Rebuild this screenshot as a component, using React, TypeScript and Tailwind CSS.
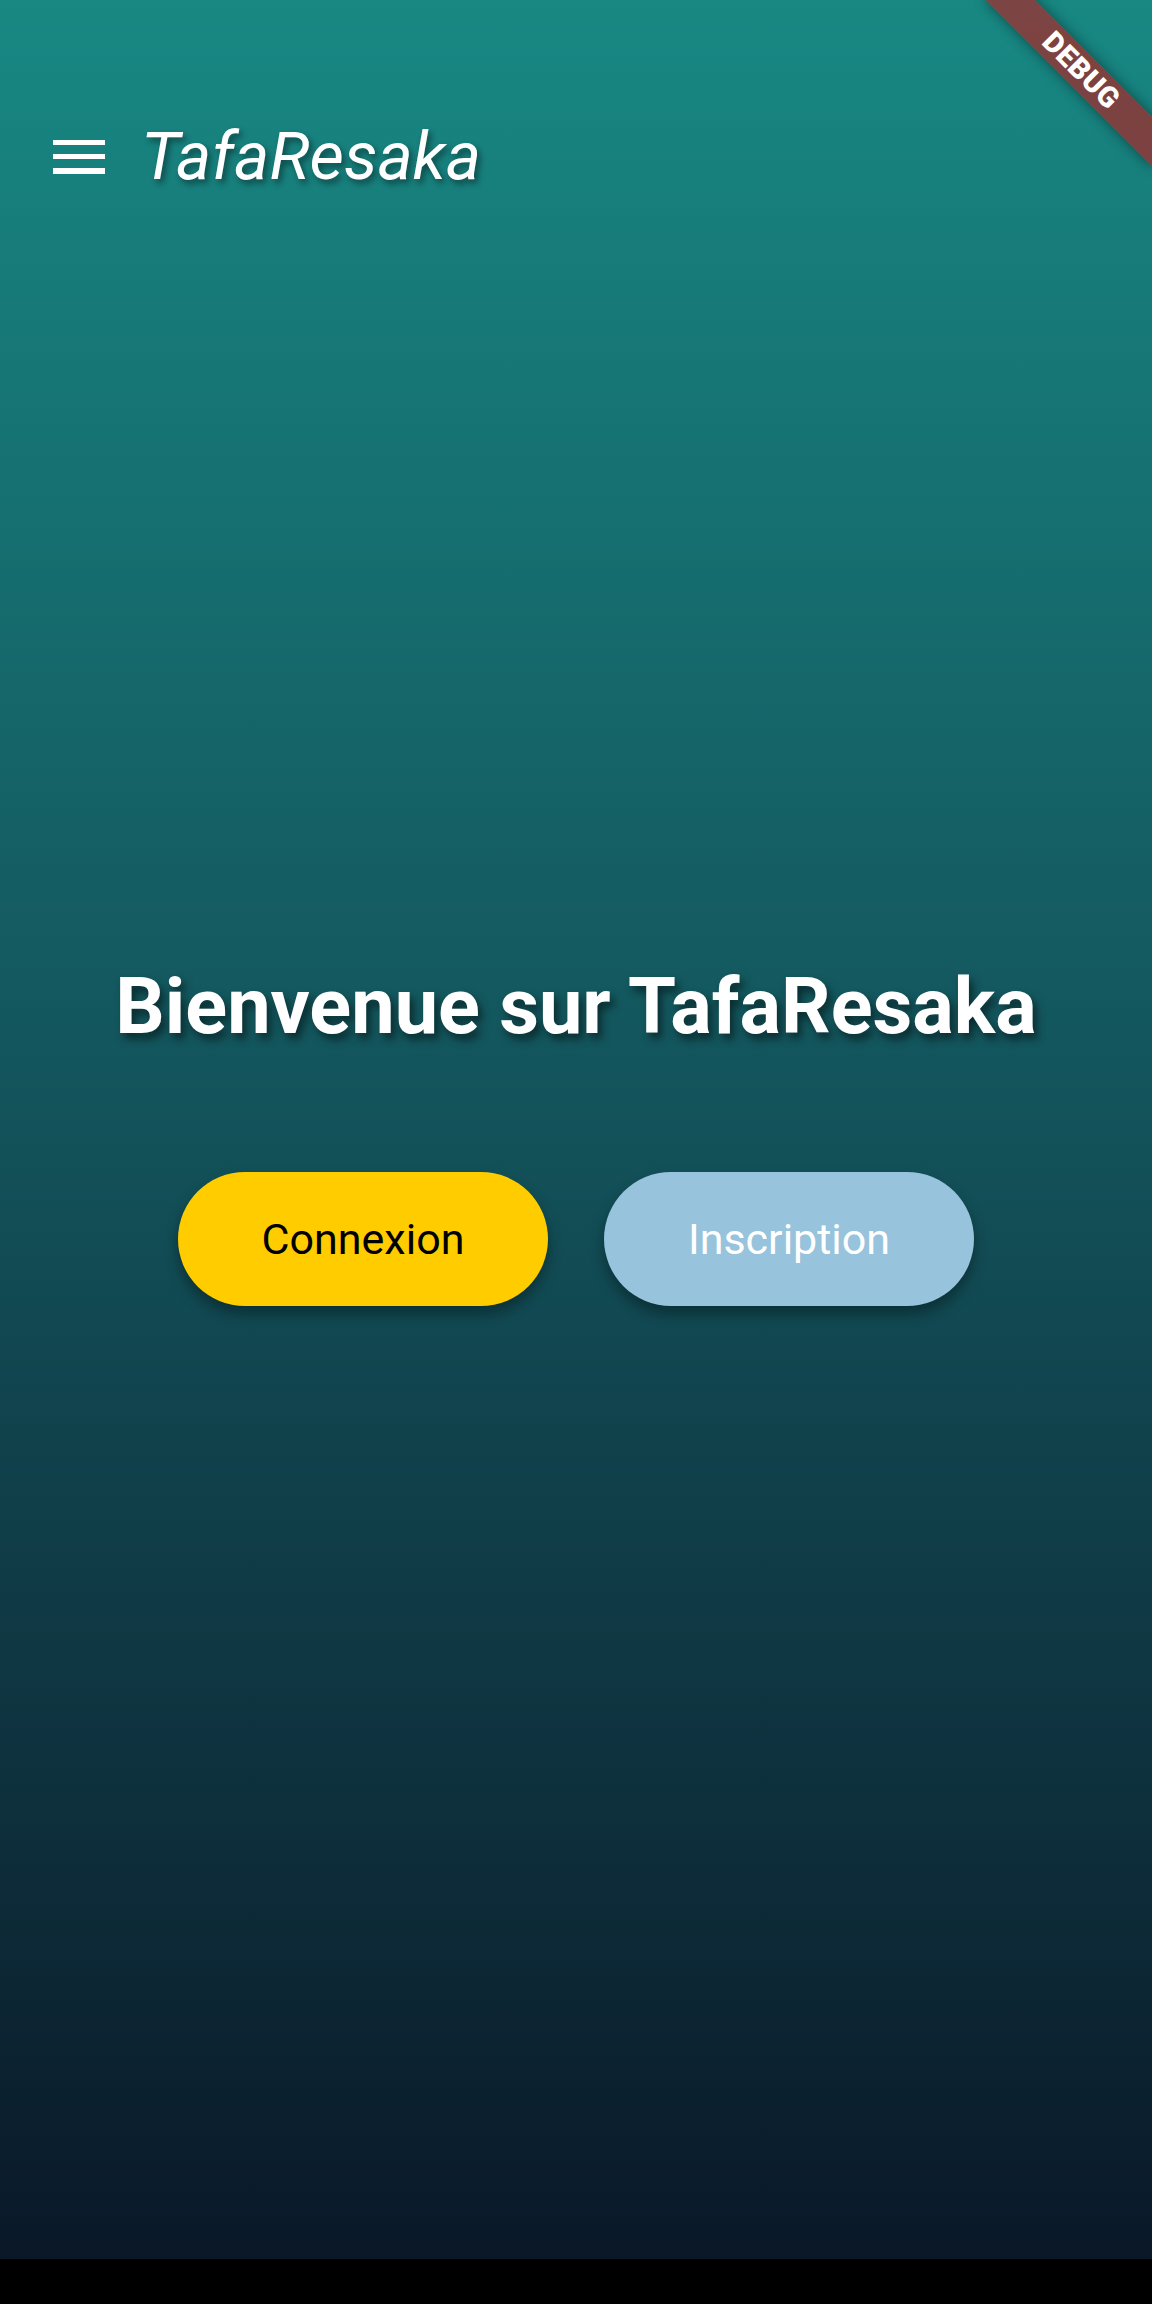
const DebugBanner = () => (
  <div className="pointer-events-none absolute left-[963px] top-[53px] flex h-[35px] w-[236px] rotate-45 items-center justify-center bg-[rgba(183,28,28,0.63)] shadow-[0_0_14px_rgba(0,0,0,0.45)]">
    <span className="text-[29px] leading-none font-black tracking-[0.5px] text-white [font-family:Roboto,'Liberation_Sans',sans-serif]">
      DEBUG
    </span>
  </div>
);

const HamburgerIcon = () => (
  <svg width="52" height="34" viewBox="0 0 52 34" className="shrink-0">
    <rect x="0" y="0" width="52" height="5" fill="#ffffff" />
    <rect x="0" y="14" width="52" height="5" fill="#ffffff" />
    <rect x="0" y="28" width="52" height="6" fill="#ffffff" />
  </svg>
);

const PillButton = ({ label, className = '' }: { label: string; className?: string }) => (
  <button
    className={`flex h-[134px] w-[370px] items-center justify-center rounded-full text-[43px] leading-none shadow-[0_8px_14px_rgba(0,0,0,0.35)] ${className}`}
  >
    {label}
  </button>
);

export default function App() {
  return (
    <div className="flex h-[2304px] w-[1152px] flex-col [font-family:Roboto,'Liberation_Sans',sans-serif]">
      <main className="relative h-[2259px] overflow-hidden bg-[linear-gradient(180deg,#188883_0%,#13525a_50%,#0a1828_100%)]">
        <DebugBanner />
        <header className="mt-[74px] flex h-[165px] items-center pl-[53px]">
          <HamburgerIcon />
          <h1 className="ml-[36px] text-[67px] leading-none font-normal italic text-white [text-shadow:3px_4px_6px_rgba(0,0,0,0.45)]">
            TafaResaka
          </h1>
        </header>

        <section className="mt-[729px] flex flex-col items-center">
          <h2 className="h-[78px] text-[77.5px] leading-none font-bold text-white [text-shadow:4px_6px_8px_rgba(0,0,0,0.5)]">
            Bienvenue sur TafaResaka
          </h2>
          <div className="mt-[126px] flex gap-[56px]">
            <PillButton label="Connexion" className="bg-[#ffcc00] text-black" />
            <PillButton label="Inscription" className="bg-[#97c3dc] text-white" />
          </div>
        </section>
      </main>
      <div className="h-[45px] bg-black" />
    </div>
  );
}
